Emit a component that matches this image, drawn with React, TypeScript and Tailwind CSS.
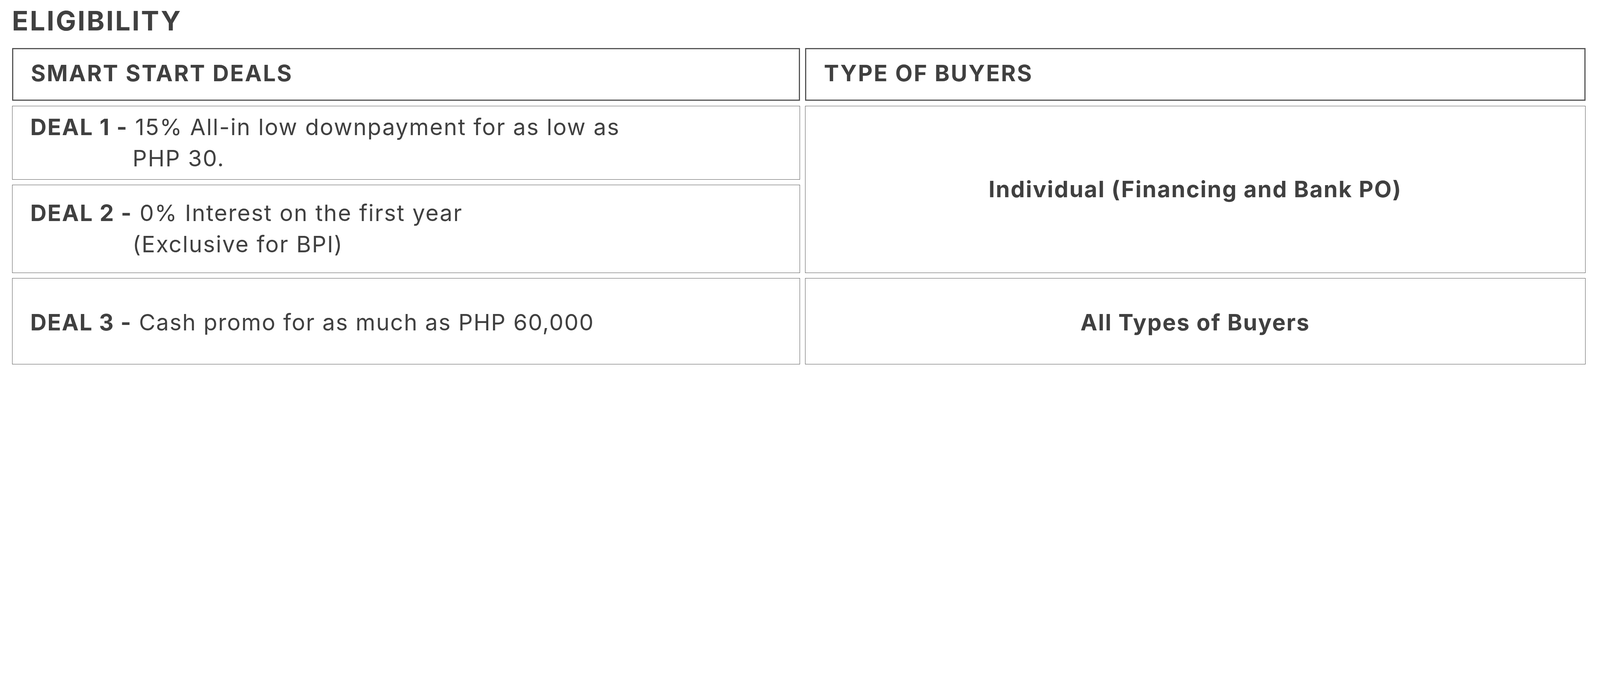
import * as React from 'react';

const deals = [
  { label: 'DEAL 1 -', first: '15% All-in low downpayment for as low as', second: 'PHP 30.' },
  { label: 'DEAL 2 -', first: '0% Interest on the first year', second: '(Exclusive for BPI)' },
];

function DealText({ label, first, second }: { label: string; first: string; second?: string }) {
  return (
    <div className="flex flex-col">
      <div className="whitespace-nowrap">
        <span className="font-bold">{label}</span> {first}
      </div>
      {second && <div className="pl-[472px] whitespace-nowrap">{second}</div>}
    </div>
  );
}

export default function App() {
  // the design is drawn at 7386px wide; fit it to the width the window really has
  const scale = typeof window !== 'undefined' ? Math.min(1, window.innerWidth / 7386) : 1;

  return (
    <div style={{ zoom: scale }} className="w-[7386px] h-[1736px] bg-white text-[#404040] font-['Inter',sans-serif] pl-[55px] pt-[35px]">
      <h1 className="text-[125px] leading-none font-bold tracking-[0.055em]">ELIGIBILITY</h1>

      <div className="mt-[61px] grid grid-cols-[3638px_3603px] grid-rows-[245px_341px_408px_399px] gap-[23px] text-[104px] leading-[144px] tracking-[0.04em]">
        <div className="border-[6px] border-[#555555] flex items-center pl-[82px] pb-[8px] font-bold tracking-[0.053em] whitespace-nowrap">
          SMART START DEALS
        </div>
        <div className="border-[6px] border-[#555555] flex items-center pl-[82px] pb-[8px] font-bold tracking-[0.053em] whitespace-nowrap">
          TYPE OF BUYERS
        </div>

        <div className="border-[3px] border-[#555555] flex items-center pl-[83px]">
          <DealText {...deals[0]} />
        </div>
        <div className="row-span-2 border-[3px] border-[#555555] flex items-center justify-center font-bold whitespace-nowrap">
          Individual (Financing and Bank PO)
        </div>
        <div className="border-[3px] border-[#555555] flex items-center pl-[83px]">
          <DealText {...deals[1]} />
        </div>

        <div className="border-[3px] border-[#555555] flex items-center pl-[83px] pt-[12px] tracking-[0.035em]">
          <DealText label="DEAL 3 -" first="Cash promo for as much as PHP 60,000" />
        </div>
        <div className="border-[3px] border-[#555555] flex items-center justify-center pt-[12px] font-bold whitespace-nowrap">
          All Types of Buyers
        </div>
      </div>
    </div>
  );
}
